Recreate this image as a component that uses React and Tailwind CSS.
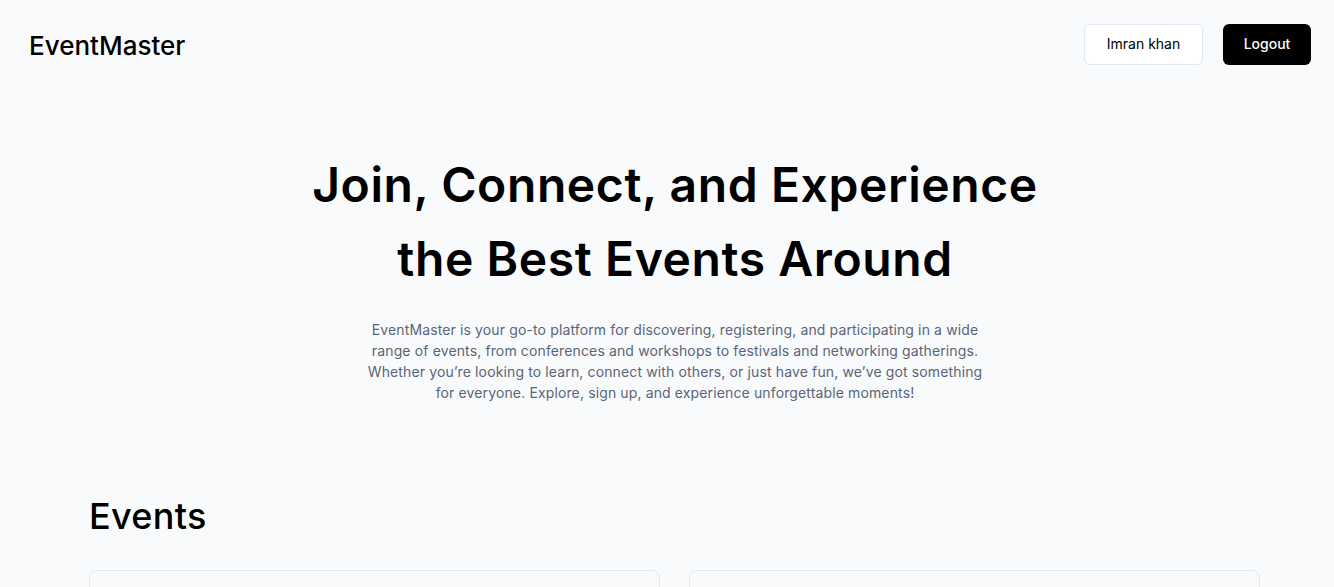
const Header = () => (
  <header className="flex items-center justify-between h-[88px] pl-[29px] pr-[23px]">
    <h1 className="mt-[2px] text-[26px] font-medium text-black">EventMaster</h1>
    <div className="flex items-center gap-5">
      <button className="h-[41px] w-[119px] rounded-md border border-slate-200 bg-white text-sm text-black">
        Imran khan
      </button>
      <button className="h-[41px] w-[88px] rounded-md bg-black text-sm font-medium text-white">
        Logout
      </button>
    </div>
  </header>
);

const Hero = () => (
  <section className="flex flex-col items-center text-center pl-[16px]">
    <h2 className="mt-[60px] text-5xl leading-[74px] font-semibold tracking-[0.6px] text-black">
      Join, Connect, and Experience
      <br />
      the Best Events Around
    </h2>
    <p className="mt-[23px] w-[625px] text-sm leading-[21px] tracking-[0.13px] text-[#5b6577]">
      EventMaster is your go-to platform for discovering, registering, and
      participating in a wide range of events, from conferences and workshops
      to festivals and networking gatherings. Whether you’re looking to learn,
      connect with others, or just have fun, we’ve got something for everyone.
      Explore, sign up, and experience unforgettable moments!
    </p>
  </section>
);

const Events = () => (
  <section className="ml-[89px] w-[1171px] mt-[93px]">
    <h3 className="text-4xl font-medium tracking-[0.3px] text-black">Events</h3>
    <div className="mt-[34px] grid grid-cols-2 gap-[29px]">
      <div className="h-[300px] rounded-lg border border-slate-200 bg-slate-50" />
      <div className="h-[300px] rounded-lg border border-slate-200 bg-slate-50" />
    </div>
  </section>
);

export default function App() {
  return (
    <div
      className="h-screen bg-slate-50 overflow-hidden"
      style={{ fontFamily: "Inter, 'Noto Sans', sans-serif" }}
    >
      <Header />
      <Hero />
      <Events />
    </div>
  );
}
